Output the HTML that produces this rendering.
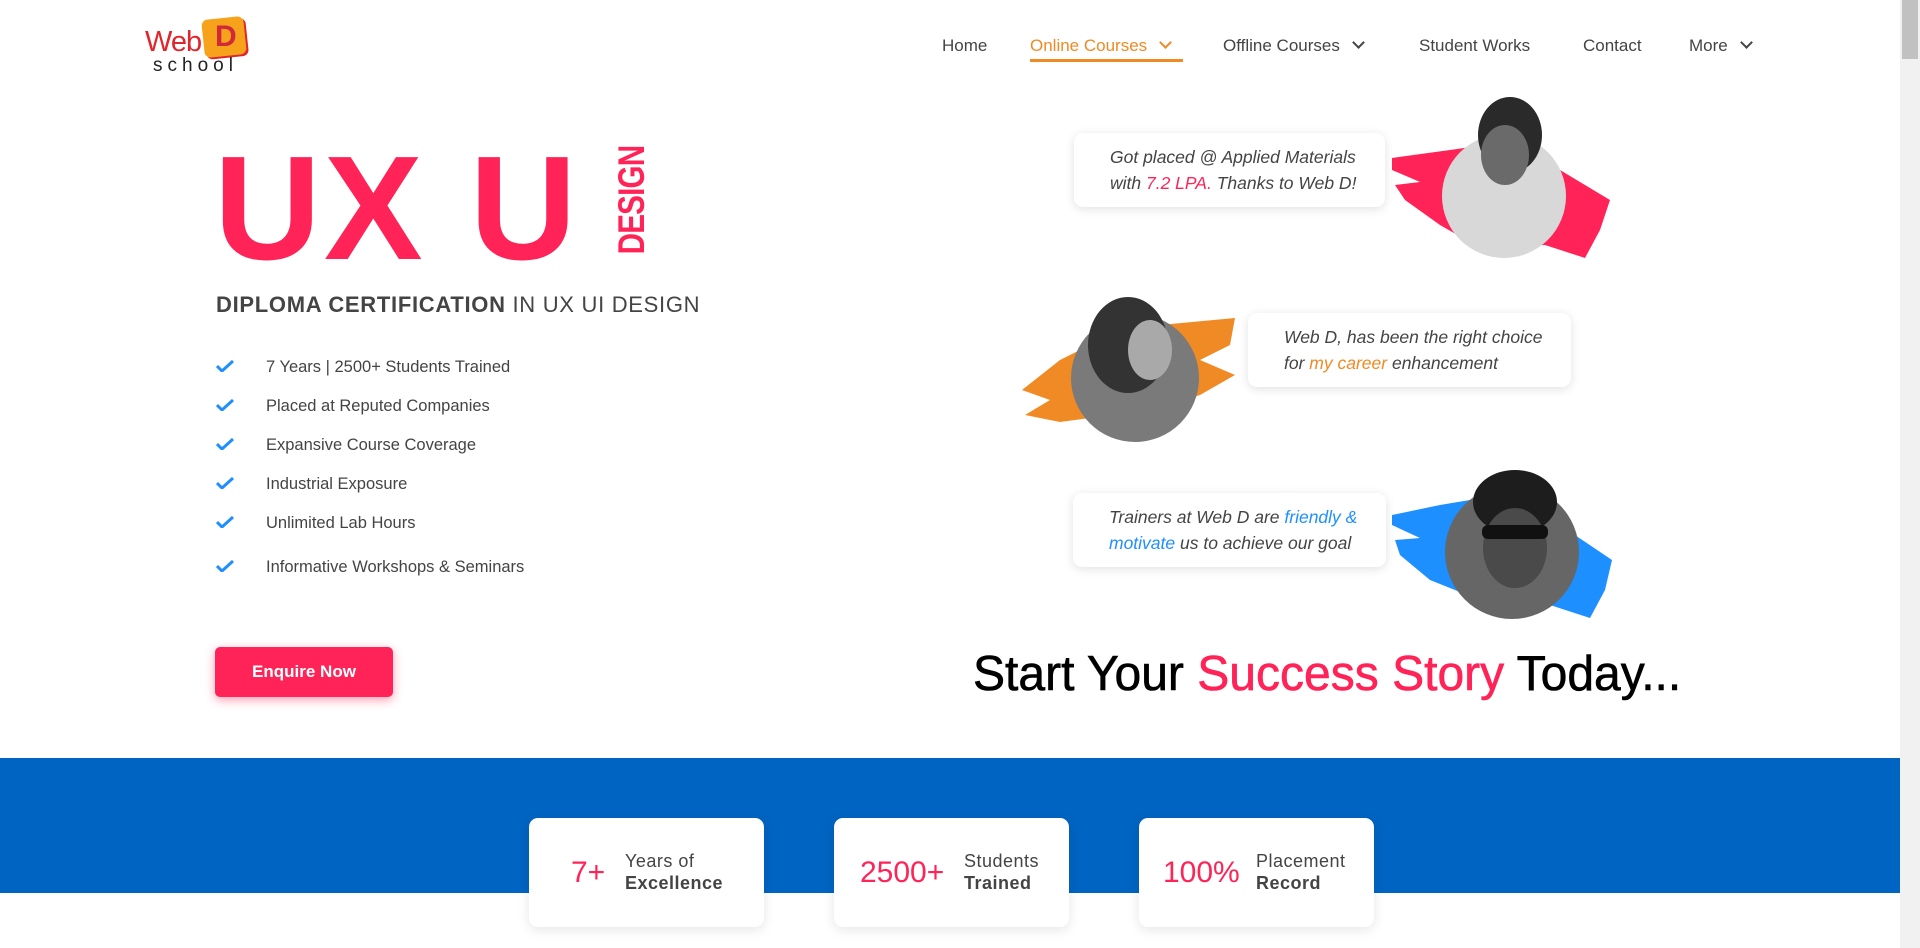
<!DOCTYPE html>
<html><head><meta charset="utf-8"><style>
*{margin:0;padding:0;box-sizing:border-box}
html,body{width:1920px;height:948px;overflow:hidden;background:#fff;font-family:"Liberation Sans",sans-serif}
.abs{position:absolute}
.nav a{position:absolute;top:36px;font-size:17px;color:#444;text-decoration:none;white-space:nowrap}
.chev{display:inline-block;width:9px;height:9px;border-right:2px solid currentColor;border-bottom:2px solid currentColor;transform:rotate(45deg);margin-left:14px;position:relative;top:-4px}
.li{position:absolute;left:266px;font-size:16.5px;color:#444}
.ck{position:absolute;left:216px;width:18px;height:12px}
.card{position:absolute;background:#fff;border-radius:9px;box-shadow:0 2px 10px rgba(0,0,0,.12);font-style:italic;font-size:17.5px;color:#444;line-height:26px;padding-top:11px}
.stat{position:absolute;top:818px;width:235px;height:109px;background:#fff;border-radius:9px;box-shadow:0 3px 12px rgba(0,0,0,.1)}
.stat .n{position:absolute;top:38px;font-size:30px;color:#ff2357}
.stat .l{position:absolute;top:32px;font-size:18px;color:#444;line-height:22px;letter-spacing:.5px}
</style></head><body>
<!-- logo -->
<div class="abs" style="left:145px;top:26px;font-size:29px;color:#e0262c;letter-spacing:-1px">Web</div>
<div class="abs" style="left:203px;top:18px;width:42px;height:38px;background:#f7a21b;border-radius:6px;transform:rotate(-6deg);box-shadow:2px 2px 0 #e0262c"></div>
<div class="abs" style="left:215px;top:20px;font-size:30px;font-weight:bold;color:#d1283a">D</div>
<div class="abs" style="left:153px;top:55px;font-size:19px;color:#222;letter-spacing:5px">school</div>
<!-- nav -->
<div class="nav">
<a style="left:942px">Home</a>
<a style="left:1030px;color:#f08a24">Online Courses<span class="chev"></span></a>
<div class="abs" style="left:1030px;top:59px;width:153px;height:3px;background:#f08a24"></div>
<a style="left:1223px">Offline Courses<span class="chev"></span></a>
<a style="left:1419px">Student Works</a>
<a style="left:1583px">Contact</a>
<a style="left:1689px">More<span class="chev"></span></a>
</div>
<div class="abs" style="left:1900px;top:0;width:20px;height:948px;background:#f1f1f1"></div>
<div class="abs" style="left:1902px;top:0;width:16px;height:59px;background:#c1c1c1"></div>
<!-- hero -->
<div class="abs" style="left:214px;top:129px;font-size:148px;font-weight:bold;color:#ff2357;letter-spacing:3px;line-height:160px">UX U</div>
<div class="abs" style="left:557px;top:184px;width:150px;height:32px;transform:rotate(-90deg) scaleX(.8);font-size:37px;font-weight:bold;color:#ff2357;line-height:32px;text-align:center;letter-spacing:-1px;">DESIGN</div>
<div class="abs" style="left:216px;top:292px;font-size:22px;color:#444;letter-spacing:.7px"><b>DIPLOMA CERTIFICATION</b> IN UX UI DESIGN</div>
<svg class="ck" style="top:360px" viewBox="0 0 18 12"><path d="M1 6l5 5L17 1" stroke="#1e8fff" stroke-width="3" fill="none"/></svg>
<div class="li" style="top:358px">7 Years | 2500+ Students Trained</div>
<svg class="ck" style="top:399px" viewBox="0 0 18 12"><path d="M1 6l5 5L17 1" stroke="#1e8fff" stroke-width="3" fill="none"/></svg>
<div class="li" style="top:397px">Placed at Reputed Companies</div>
<svg class="ck" style="top:438px" viewBox="0 0 18 12"><path d="M1 6l5 5L17 1" stroke="#1e8fff" stroke-width="3" fill="none"/></svg>
<div class="li" style="top:436px">Expansive Course Coverage</div>
<svg class="ck" style="top:477px" viewBox="0 0 18 12"><path d="M1 6l5 5L17 1" stroke="#1e8fff" stroke-width="3" fill="none"/></svg>
<div class="li" style="top:475px">Industrial Exposure</div>
<svg class="ck" style="top:516px" viewBox="0 0 18 12"><path d="M1 6l5 5L17 1" stroke="#1e8fff" stroke-width="3" fill="none"/></svg>
<div class="li" style="top:514px">Unlimited Lab Hours</div>
<svg class="ck" style="top:560px" viewBox="0 0 18 12"><path d="M1 6l5 5L17 1" stroke="#1e8fff" stroke-width="3" fill="none"/></svg>
<div class="li" style="top:558px">Informative Workshops &amp; Seminars</div>
<div class="abs" style="left:215px;top:647px;width:178px;height:50px;background:#ff2357;border-radius:5px;box-shadow:0 3px 10px rgba(255,35,87,.45);color:#fff;font-weight:bold;font-size:17px;text-align:center;line-height:50px">Enquire Now</div>
<!-- testimonials -->
<svg class="abs" style="left:0;top:0" width="1900" height="760">
<path d="M1392 158 L1450 150 L1520 140 L1560 170 L1610 200 L1600 230 L1585 258 L1545 245 L1480 248 L1440 225 L1405 200 L1395 185 L1420 182 L1392 170Z" fill="#ff2357"/>
<circle cx="1504" cy="196" r="62" fill="#d8d8d8"/>
<ellipse cx="1510" cy="135" rx="32" ry="38" fill="#2a2a2a"/>
<ellipse cx="1505" cy="155" rx="24" ry="30" fill="#6a6a6a"/>
<path d="M1022 390 L1060 360 L1100 340 L1160 325 L1235 318 L1230 345 L1200 360 L1235 375 L1200 395 L1150 410 L1060 422 L1025 415 L1050 400Z" fill="#f08a24"/>
<circle cx="1135" cy="378" r="64" fill="#7a7a7a"/>
<ellipse cx="1128" cy="345" rx="40" ry="48" fill="#333"/>
<ellipse cx="1150" cy="350" rx="22" ry="30" fill="#a9a9a9"/>
<path d="M1392 515 L1440 505 L1500 495 L1560 525 L1612 560 L1605 590 L1590 618 L1550 605 L1480 600 L1430 580 L1400 555 L1395 540 L1420 538 L1392 525Z" fill="#1e8fff"/>
<circle cx="1512" cy="552" r="67" fill="#666"/>
<ellipse cx="1515" cy="502" rx="42" ry="32" fill="#1d1d1d"/>
<ellipse cx="1515" cy="548" rx="32" ry="40" fill="#4a4a4a"/>
<rect x="1482" y="525" width="66" height="14" rx="6" fill="#111"/>
</svg>
<div class="card" style="left:1074px;top:133px;width:311px;height:74px;padding-left:36px">Got placed @ Applied Materials<br>with <span style="color:#ff2357">7.2 LPA.</span> Thanks to Web D!</div>
<div class="card" style="left:1248px;top:313px;width:323px;height:74px;padding-left:36px">Web D, has been the right choice<br>for <span style="color:#f08a24">my career</span> enhancement</div>
<div class="card" style="left:1073px;top:493px;width:313px;height:74px;padding-left:36px">Trainers at Web D are <span style="color:#1e8fff">friendly &amp;</span><br><span style="color:#1e8fff">motivate</span> us to achieve our goal</div>
<div class="abs" style="left:973px;top:646px;font-size:49px;color:#000;white-space:nowrap;transform:scaleX(.98);transform-origin:0 0;-webkit-text-stroke:.6px currentColor">Start Your <span style="color:#ff2357">Success Story</span> Today...</div>
<!-- stats -->
<div class="abs" style="left:0;top:758px;width:1900px;height:135px;background:#0064c2"></div>
<div class="stat" style="left:529px"><div class="n" style="left:42px">7+</div><div class="l" style="left:96px">Years of<br><b>Excellence</b></div></div>
<div class="stat" style="left:834px"><div class="n" style="left:26px">2500+</div><div class="l" style="left:130px">Students<br><b>Trained</b></div></div>
<div class="stat" style="left:1139px"><div class="n" style="left:24px">100%</div><div class="l" style="left:117px">Placement<br><b>Record</b></div></div>
</body></html>
